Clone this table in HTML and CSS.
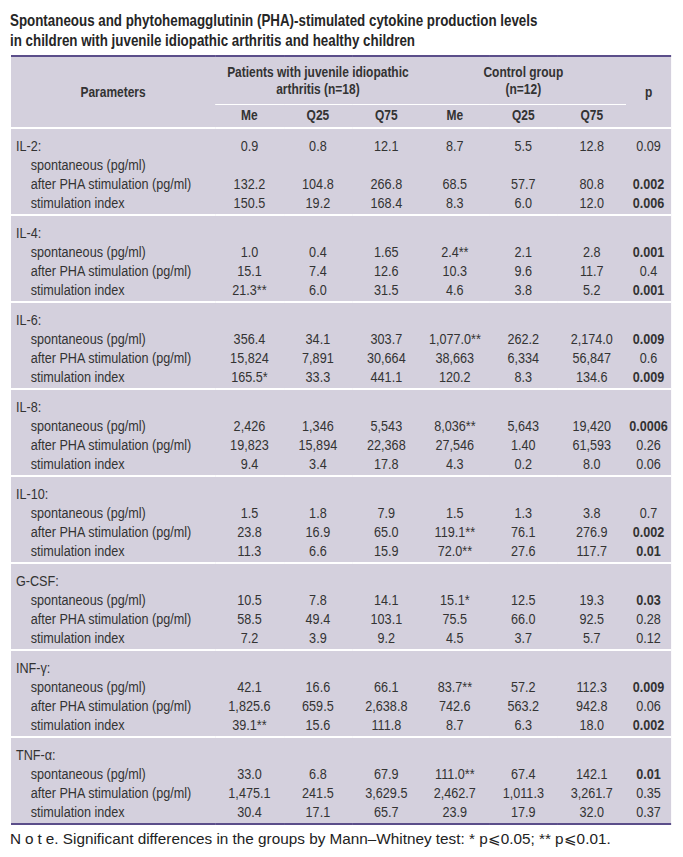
FILE: index.html
```html
<!DOCTYPE html>
<html lang="en">
<head>
<meta charset="utf-8">
<title>Cytokine production levels</title>
<link rel="stylesheet" href="styles.css">
</head>
<body>
<div class="page">
  <h1 class="title narrow">Spontaneous and phytohemagglutinin (PHA)-stimulated cytokine production levels<br>in children with juvenile idiopathic arthritis and healthy children</h1>
  <table class="data narrow">
    <colgroup>
      <col class="c-param"><col class="c-val"><col class="c-val"><col class="c-val"><col class="c-val"><col class="c-val"><col class="c-val"><col class="c-p">
    </colgroup>
    <thead>
      <tr class="h1">
        <th rowspan="2" class="hp">Parameters</th>
        <th colspan="3" class="grp">Patients with juvenile idiopathic<br>arthritis (n=18)</th>
        <th colspan="3" class="grp grp2">Control group<br>(n=12)</th>
        <th rowspan="2" class="hp">p</th>
      </tr>
      <tr class="h2">
        <th>Me</th><th>Q25</th><th>Q75</th><th>Me</th><th>Q25</th><th>Q75</th>
      </tr>
    </thead>
    <tbody>
      <tr class="first"><td class="name">IL-2:</td><td>0.9</td><td>0.8</td><td>12.1</td><td>8.7</td><td>5.5</td><td>12.8</td><td>0.09</td></tr>
      <tr><td class="sub">spontaneous (pg/ml)</td><td></td><td></td><td></td><td></td><td></td><td></td><td></td></tr>
      <tr><td class="sub">after PHA stimulation (pg/ml)</td><td>132.2</td><td>104.8</td><td>266.8</td><td>68.5</td><td>57.7</td><td>80.8</td><td class="b">0.002</td></tr>
      <tr class="last"><td class="sub">stimulation index</td><td>150.5</td><td>19.2</td><td>168.4</td><td>8.3</td><td>6.0</td><td>12.0</td><td class="b">0.006</td></tr>

      <tr class="first"><td class="name">IL-4:</td><td></td><td></td><td></td><td></td><td></td><td></td><td></td></tr>
      <tr><td class="sub">spontaneous (pg/ml)</td><td>1.0</td><td>0.4</td><td>1.65</td><td>2.4**</td><td>2.1</td><td>2.8</td><td class="b">0.001</td></tr>
      <tr><td class="sub">after PHA stimulation (pg/ml)</td><td>15.1</td><td>7.4</td><td>12.6</td><td>10.3</td><td>9.6</td><td>11.7</td><td>0.4</td></tr>
      <tr class="last"><td class="sub">stimulation index</td><td>21.3**</td><td>6.0</td><td>31.5</td><td>4.6</td><td>3.8</td><td>5.2</td><td class="b">0.001</td></tr>

      <tr class="first"><td class="name">IL-6:</td><td></td><td></td><td></td><td></td><td></td><td></td><td></td></tr>
      <tr><td class="sub">spontaneous (pg/ml)</td><td>356.4</td><td>34.1</td><td>303.7</td><td>1,077.0**</td><td>262.2</td><td>2,174.0</td><td class="b">0.009</td></tr>
      <tr><td class="sub">after PHA stimulation (pg/ml)</td><td>15,824</td><td>7,891</td><td>30,664</td><td>38,663</td><td>6,334</td><td>56,847</td><td>0.6</td></tr>
      <tr class="last"><td class="sub">stimulation index</td><td>165.5*</td><td>33.3</td><td>441.1</td><td>120.2</td><td>8.3</td><td>134.6</td><td class="b">0.009</td></tr>

      <tr class="first"><td class="name">IL-8:</td><td></td><td></td><td></td><td></td><td></td><td></td><td></td></tr>
      <tr><td class="sub">spontaneous (pg/ml)</td><td>2,426</td><td>1,346</td><td>5,543</td><td>8,036**</td><td>5,643</td><td>19,420</td><td class="b">0.0006</td></tr>
      <tr><td class="sub">after PHA stimulation (pg/ml)</td><td>19,823</td><td>15,894</td><td>22,368</td><td>27,546</td><td>1.40</td><td>61,593</td><td>0.26</td></tr>
      <tr class="last"><td class="sub">stimulation index</td><td>9.4</td><td>3.4</td><td>17.8</td><td>4.3</td><td>0.2</td><td>8.0</td><td>0.06</td></tr>

      <tr class="first"><td class="name">IL-10:</td><td></td><td></td><td></td><td></td><td></td><td></td><td></td></tr>
      <tr><td class="sub">spontaneous (pg/ml)</td><td>1.5</td><td>1.8</td><td>7.9</td><td>1.5</td><td>1.3</td><td>3.8</td><td>0.7</td></tr>
      <tr><td class="sub">after PHA stimulation (pg/ml)</td><td>23.8</td><td>16.9</td><td>65.0</td><td>119.1**</td><td>76.1</td><td>276.9</td><td class="b">0.002</td></tr>
      <tr class="last"><td class="sub">stimulation index</td><td>11.3</td><td>6.6</td><td>15.9</td><td>72.0**</td><td>27.6</td><td>117.7</td><td class="b">0.01</td></tr>

      <tr class="first"><td class="name">G-CSF:</td><td></td><td></td><td></td><td></td><td></td><td></td><td></td></tr>
      <tr><td class="sub">spontaneous (pg/ml)</td><td>10.5</td><td>7.8</td><td>14.1</td><td>15.1*</td><td>12.5</td><td>19.3</td><td class="b">0.03</td></tr>
      <tr><td class="sub">after PHA stimulation (pg/ml)</td><td>58.5</td><td>49.4</td><td>103.1</td><td>75.5</td><td>66.0</td><td>92.5</td><td>0.28</td></tr>
      <tr class="last"><td class="sub">stimulation index</td><td>7.2</td><td>3.9</td><td>9.2</td><td>4.5</td><td>3.7</td><td>5.7</td><td>0.12</td></tr>

      <tr class="first"><td class="name">INF-γ:</td><td></td><td></td><td></td><td></td><td></td><td></td><td></td></tr>
      <tr><td class="sub">spontaneous (pg/ml)</td><td>42.1</td><td>16.6</td><td>66.1</td><td>83.7**</td><td>57.2</td><td>112.3</td><td class="b">0.009</td></tr>
      <tr><td class="sub">after PHA stimulation (pg/ml)</td><td>1,825.6</td><td>659.5</td><td>2,638.8</td><td>742.6</td><td>563.2</td><td>942.8</td><td>0.06</td></tr>
      <tr class="last"><td class="sub">stimulation index</td><td>39.1**</td><td>15.6</td><td>111.8</td><td>8.7</td><td>6.3</td><td>18.0</td><td class="b">0.002</td></tr>

      <tr class="first"><td class="name">TNF-α:</td><td></td><td></td><td></td><td></td><td></td><td></td><td></td></tr>
      <tr><td class="sub">spontaneous (pg/ml)</td><td>33.0</td><td>6.8</td><td>67.9</td><td>111.0**</td><td>67.4</td><td>142.1</td><td class="b">0.01</td></tr>
      <tr><td class="sub">after PHA stimulation (pg/ml)</td><td>1,475.1</td><td>241.5</td><td>3,629.5</td><td>2,462.7</td><td>1,011.3</td><td>3,261.7</td><td>0.35</td></tr>
      <tr class="last"><td class="sub">stimulation index</td><td>30.4</td><td>17.1</td><td>65.7</td><td>23.9</td><td>17.9</td><td>32.0</td><td>0.37</td></tr>
    </tbody>
  </table>
  <p class="note"><span class="spaced">Not</span>e. Significant differences in the groups by Mann–Whitney test: * p⩽0.05; ** p⩽0.01.</p>
</div>
</body>
</html>
```
FILE: styles.css
```css
html, body {
  margin: 0;
  padding: 0;
  background: #ffffff;
}
.page {
  padding: 10px 0 0 11px;
  overflow: hidden;
  font-family: "Liberation Sans", Arial, sans-serif;
  color: #2e2e2e;
}
/* emulate Arial Narrow: Arial metrics compressed horizontally */
.narrow {
  width: 805px;
  transform: scaleX(0.82);
  transform-origin: 0 0;
}
.title {
  margin: 0 0 5px -1px;
  font-size: 16.3px;
  line-height: 20px;
  font-weight: bold;
  color: #262626;
}
.data {
  table-layout: fixed;
  border-collapse: collapse;
  background: #d4d0dd;
  font-size: 15.4px;
  border-top: 2px solid #5b4e8a;
  border-bottom: 2px solid #5b4e8a;
}
.c-param { width: 249px; }
.c-val { width: 83.5px; }
.c-p { width: 55px; }
th {
  font-weight: bold;
  font-size: 14.6px;
  color: #333;
  padding: 0;
  text-align: center;
  vertical-align: middle;
}
.h1 th.grp {
  height: 47px;
  line-height: 17px;
  border-bottom: 1px solid #ffffff;
}
.h2 th {
  height: 21px;
  line-height: 21px;
  padding-bottom: 1px;
}
td {
  padding: 0;
  height: 19px;
  line-height: 19px;
  text-align: center;
  white-space: nowrap;
  color: #333;
}
td.name {
  text-align: left;
  padding-left: 6px;
}
td.sub {
  text-align: left;
  padding-left: 24px;
}
td.b {
  font-weight: bold;
}
tr.first td {
  border-top: 2px solid #ffffff;
  padding-top: 7px;
}
tr.last td {
  padding-bottom: 2px;
}
.note {
  margin: 5px 0 0 -1px;
  font-size: 15.3px;
  line-height: 18px;
  color: #222;
}
.spaced {
  letter-spacing: 4px;
}
```
